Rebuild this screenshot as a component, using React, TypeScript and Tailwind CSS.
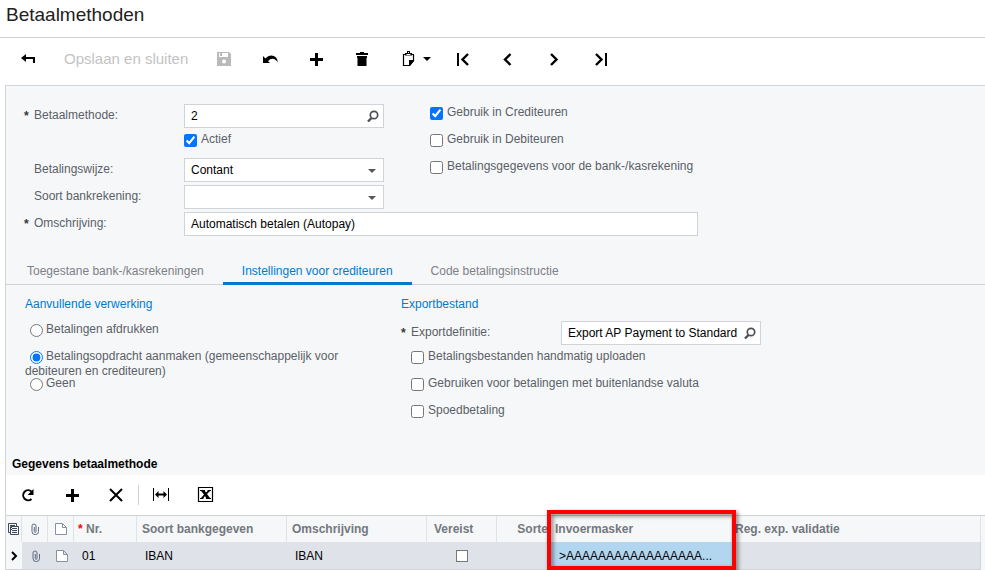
import React from "react";
import { clsx, type ClassValue } from "clsx";
import { twMerge } from "tailwind-merge";

function cn(...inputs: ClassValue[]) {
  return twMerge(clsx(inputs));
}

// ── Icons ─────────────────────────────────────────────────
function Icon({ children, className }: { children: React.ReactNode; className?: string }) {
  return (
    <svg viewBox="0 0 20 20" className={cn("w-5 h-5 shrink-0 block", className)} fill="currentColor" aria-hidden="true">
      {children}
    </svg>
  );
}

const BackIcon = () => (
  <Icon>
    <path d="M3 9 8 5v3h9v6h-2v-4H8v3z" />
  </Icon>
);

const SaveIcon = () => (
  <Icon>
    <path fillRule="evenodd" d="M3 3h12l2 2v12H3zM5 4v4h9V4zM10 10.500a2 2 0 1 0 0 4 2 2 0 0 0 0-4z" />
    <path d="M6 4h2v3H6z" />
  </Icon>
);

const UndoIcon = () => (
  <Icon>
    <path d="M3 7v7h7L8 12.200C11 8.500 15.500 9 17.500 13.500 18.500 7 10 3.500 5.500 9.500z" />
  </Icon>
);

const PlusIcon = () => (
  <Icon>
    <path d="M9 4h3v5h5v3h-5v5H9v-5H4V9h5z" />
  </Icon>
);

const TrashIcon = () => (
  <Icon>
    <path d="M8 3h4v1h4v2H4V4h4zM5 7h10v2h-.5v8h-9V9H5z" />
  </Icon>
);

const PasteIcon = () => (
  <svg viewBox="0 0 34 20" className="w-[34px] h-5 block" fill="currentColor" aria-hidden="true">
    <path d="M5.500 5.500h10v6l-4 5h-6z" fill="none" stroke="currentColor" strokeWidth="1.200" />
    <path d="M7 4h2V2h3v2h2v2.500H7zM11 11h5v1l-4 5h-1z" />
    <path d="M10 3h1v1h-1zM8.500 5h4v1h-4z" fill="#fff" />
    <path d="M25 8h8l-4 4z" />
  </svg>
);

const FirstIcon = () => (
  <Icon>
    <path d="M4 4h2v13H4z" />
    <path d="m15 5-5.500 5.500L15 16" fill="none" stroke="currentColor" strokeWidth="2.400" />
  </Icon>
);

const PrevIcon = () => (
  <Icon>
    <path d="m11.500 5-5.500 5.500 5.500 5.500" fill="none" stroke="currentColor" strokeWidth="2.400" />
  </Icon>
);

const NextIcon = () => (
  <Icon>
    <path d="m6 5 5.500 5.500L6 16" fill="none" stroke="currentColor" strokeWidth="2.400" />
  </Icon>
);

const LastIcon = () => (
  <Icon>
    <path d="M14 4h2v13h-2z" />
    <path d="m5 5 5.500 5.500L5 16" fill="none" stroke="currentColor" strokeWidth="2.400" />
  </Icon>
);

const RefreshIcon = () => (
  <Icon>
    <path d="M13.500 6.500A5 5 0 1 0 13.500 14" fill="none" stroke="currentColor" strokeWidth="2" />
    <path d="M15.500 4v6h-6z" />
  </Icon>
);

const CloseIcon = () => (
  <Icon>
    <path d="m4 4 12 12M16 4 4 16" fill="none" stroke="currentColor" strokeWidth="2" />
  </Icon>
);

const FitIcon = () => (
  <Icon>
    <path d="M2 3h1v13H2zM17 3h1v13h-1zM4 9.500 7.500 6v2.500h5V6L16 9.500 12.500 13v-2.500h-5V13z" />
  </Icon>
);

const ExcelIcon = () => (
  <Icon>
    <path d="M3.500 2.500h14v14h-14z" fill="none" stroke="currentColor" strokeWidth="1.200" />
    <path d="M5 5h5v1l1 1.500L12.500 6V5H16v1h-1l-3 3 3 4h1v1h-5v-1l-1-2-1.500 2v1H5v-1h1l3-3.500L6 6H5z" />
  </Icon>
);

const ClipIcon = () => (
  <svg viewBox="0 0 12 14" className="w-3 h-[14px] block mx-auto" fill="none" stroke="#5f6b80" strokeWidth="1" aria-hidden="true">
    <path d="M9.500 5v4.500a3 3 0 0 1-3 3H6a3 3 0 0 1-3-3V4a2 2 0 0 1 2-2 2 2 0 0 1 2 2v5.500a.8.8 0 0 1-1.700 0V5" />
  </svg>
);

const NoteIcon = () => (
  <svg viewBox="0 0 12 14" className="w-3 h-[14px] block mx-auto" fill="#fff" stroke="#8791a3" aria-hidden="true">
    <path d="M.5 1.500h7l4 4v7H.5zM7.500 1.500v4h4" />
  </svg>
);

const FilesIcon = () => (
  <svg viewBox="0 0 12 14" className="w-3 h-[14px] block mx-auto" fill="none" stroke="#3f495c" aria-hidden="true">
    <path d="M2.500 10.500h-2v-9h8v3M2 3.500h5M2 5.500h2M2 7.500h2M2.500 12.500v-8h8v8zM4 6.500h5M4 8.500h5M4 10.500h5" />
  </svg>
);

// ── Form pieces ───────────────────────────────────────────
const box = "w-full h-6 bg-white border border-[#d0d3d8] text-black px-1.5 leading-[22px] outline-none";

function FieldLabel({ htmlFor, required, children }: { htmlFor: string; required?: boolean; children: React.ReactNode }) {
  return (
    <label htmlFor={htmlFor} className="flex shrink-0 leading-[22px] text-[#5c5f66]">
      <span className="w-[10px] pt-px font-bold text-[#33363b]">{required && "*"}</span>
      {children}
    </label>
  );
}

function LookupInput({ id, value }: { id: string; value: string }) {
  return (
    <div className="relative w-[200px]">
      <input id={id} defaultValue={value} className={cn(box, "pr-5")} />
      <button aria-label="Zoeken" className="absolute right-[5px] top-[6px]">
        <svg viewBox="0 0 12 12" className="w-3 h-3 block" fill="none" stroke="#4c4f55" aria-hidden="true">
          <circle cx="7" cy="5" r="3.700" strokeWidth="1.700" />
          <path d="M4.500 8 1 11.500" strokeWidth="2.400" />
        </svg>
      </button>
    </div>
  );
}

function SelectBox({ id, options }: { id: string; options: string[] }) {
  return (
    <div className="relative w-[200px]">
      <select id={id} className={cn(box, "appearance-none")}>
        {options.map((o) => (
          <option key={o}>{o}</option>
        ))}
      </select>
      <svg viewBox="0 0 8 4" className="absolute right-2 top-[11px] w-2 h-1 pointer-events-none" fill="#55585e" aria-hidden="true">
        <path d="M0 0h8L4 4z" />
      </svg>
    </div>
  );
}

function Check({ label, checked }: { label: string; checked?: boolean }) {
  return (
    <label className="flex h-6 items-start text-[#5c5f66]">
      <input type="checkbox" defaultChecked={checked} className="w-[13px] h-[13px] mt-[3px] mr-1 shrink-0" />
      <span className="leading-4">{label}</span>
    </label>
  );
}

function Radio({ label, checked }: { label: string; checked?: boolean }) {
  return (
    <label className="block h-[27px] leading-[15px] text-[#5c5f66]">
      <input type="radio" name="verwerking" defaultChecked={checked} className="w-[13px] h-[13px] ml-[5px] mr-[3px] align-[-4px]" />
      {label}
    </label>
  );
}

// ── Tabs ──────────────────────────────────────────────────
const tabs = ["Toegestane bank-/kasrekeningen", "Instellingen voor crediteuren", "Code betalingsinstructie"];

function TabBar({ active }: { active: number }) {
  return (
    <div role="tablist" className="flex h-[29px] pl-[2px] border-b border-[#d0d3d8]">
      {tabs.map((tab, i) => (
        <button
          key={tab}
          role="tab"
          aria-selected={i === active}
          className={cn(
            "h-[29px] px-[19px] pt-1 border-b-[3px]",
            i === active ? "text-[#027acc] border-[#027acc]" : "text-[#7e8085] border-transparent"
          )}
        >
          {tab}
        </button>
      ))}
    </div>
  );
}

// ── Toolbars ──────────────────────────────────────────────
function MainToolbar() {
  return (
    <div className="flex items-center h-[47px] pl-[18px] pb-[5px]">
      <div className="flex items-center gap-[26px]">
        <button aria-label="Terug"><BackIcon /></button>
        <button disabled className="text-[15px] text-[#c3c3c3]">Opslaan en sluiten</button>
        <button disabled aria-label="Opslaan" className="text-[#b9b9b9]"><SaveIcon /></button>
        <button aria-label="Ongedaan maken"><UndoIcon /></button>
        <button aria-label="Toevoegen"><PlusIcon /></button>
        <button aria-label="Verwijderen"><TrashIcon /></button>
        <button aria-label="Klembord"><PasteIcon /></button>
      </div>
      <div className="flex items-center gap-[26px] ml-[21px]">
        <button aria-label="Eerste"><FirstIcon /></button>
        <button aria-label="Vorige"><PrevIcon /></button>
        <button aria-label="Volgende"><NextIcon /></button>
        <button aria-label="Laatste"><LastIcon /></button>
      </div>
    </div>
  );
}

function GridToolbar() {
  return (
    <div className="flex items-center h-10 pl-3 pb-px gap-6 bg-white">
      <button aria-label="Vernieuwen"><RefreshIcon /></button>
      <button aria-label="Rij toevoegen"><PlusIcon /></button>
      <button aria-label="Rij verwijderen"><CloseIcon /></button>
      <div className="-ml-3 border-l border-[#d0d3d8] pl-3">
        <button className="block" aria-label="Kolommen passend maken"><FitIcon /></button>
      </div>
      <button aria-label="Exporteren naar Excel"><ExcelIcon /></button>
    </div>
  );
}

// ── Details grid ──────────────────────────────────────────
const th = "h-[26px] p-0 pl-[5px] text-left font-bold text-[#74777d] bg-[#f5f7f9] border-r border-[#dfe2e7] whitespace-nowrap";
const td = "h-7 p-0 pl-2 bg-[#dfe2e8] border-b border-[#d0d3d8] whitespace-nowrap text-black";

function DetailsTable() {
  return (
    <div className="border-t border-[#d0d3d8] pr-1">
      <table className="w-full table-fixed border-separate border-spacing-0">
        <colgroup>
          <col className="w-4" />
          <col className="w-[26px]" />
          <col className="w-[26px]" />
          <col className="w-[63px]" />
          <col className="w-[150px]" />
          <col className="w-[140px]" />
          <col className="w-[70px]" />
          <col className="w-[54px]" />
          <col className="w-[181px]" />
          <col />
        </colgroup>
        <thead>
          <tr>
            <th className={cn(th, "pl-0")}><FilesIcon /></th>
            <th className={cn(th, "pl-0")}><ClipIcon /></th>
            <th className={cn(th, "pl-0")}><NoteIcon /></th>
            <th className={cn(th, "pl-1")}><span className="text-[#ff0000]">*</span> Nr.</th>
            <th className={th}>Soort bankgegeven</th>
            <th className={th}>Omschrijving</th>
            <th className={cn(th, "pl-[7px]")}>Vereist</th>
            <th className={cn(th, "pl-0 pr-[2px] text-right")}>Sorte</th>
            <th className={cn(th, "relative pl-1")}>
              Invoermasker
              <div className="absolute z-10 -left-1 -right-[5px] -top-1.5 h-[60px] border-4 border-[#fe0000] drop-shadow-[2px_2px_2px_rgba(0,0,0,0.5)] pointer-events-none" />
            </th>
            <th className={cn(th, "pl-[3px]")}>Reg. exp. validatie</th>
          </tr>
        </thead>
        <tbody>
          <tr>
            <td className={cn(td, "pl-0 bg-[#f5f7f9]")}>
              <svg viewBox="0 0 8 10" className="w-2 h-[10px] block mx-auto" fill="none" stroke="#000" strokeWidth="2" aria-hidden="true">
                <path d="m2 1 4 4-4 4" />
              </svg>
            </td>
            <td className={cn(td, "pl-px")}><ClipIcon /></td>
            <td className={cn(td, "pl-px")}><NoteIcon /></td>
            <td className={td}>01</td>
            <td className={td}>IBAN</td>
            <td className={td}>IBAN</td>
            <td className={cn(td, "pl-0")}>
              <input type="checkbox" aria-label="Vereist" className="block mx-auto appearance-none w-3 h-3 bg-white border border-[#777]" />
            </td>
            <td className={td} />
            <td className={cn(td, "bg-[#b3d6f0]")}>&gt;AAAAAAAAAAAAAAAAA...</td>
            <td className={cn(td, "border-r")} />
          </tr>
        </tbody>
      </table>
    </div>
  );
}

export default function App() {
  return (
    <div className="bg-white text-black text-[12px] leading-4 font-['Liberation_Sans',Arial,sans-serif]">
      <header className="h-[38px] pl-[6px] border-b border-[#d0d3d8]">
        <h1 className="text-[19px] leading-[30px] text-[#222]">Betaalmethoden</h1>
      </header>
      <MainToolbar />

      <main className="ml-[5px] border-l border-t border-[#d0d3d8] bg-[#f5f7f9]">
        <section className="pt-[18px] pl-[18px] pb-5 grid grid-cols-[160px_246px_1fr]">
          <div className="grid gap-[3px] auto-rows-[24px]">
            <FieldLabel htmlFor="methode" required>Betaalmethode:</FieldLabel>
            <span />
            <FieldLabel htmlFor="wijze">Betalingswijze:</FieldLabel>
            <FieldLabel htmlFor="soort">Soort bankrekening:</FieldLabel>
            <FieldLabel htmlFor="omschrijving" required>Omschrijving:</FieldLabel>
          </div>
          <div className="grid gap-[3px] auto-rows-[24px]">
            <LookupInput id="methode" value="2" />
            <Check label="Actief" checked />
            <SelectBox id="wijze" options={["Contant"]} />
            <SelectBox id="soort" options={[""]} />
            <div className="w-[514px]">
              <input id="omschrijving" defaultValue="Automatisch betalen (Autopay)" className={box} />
            </div>
          </div>
          <div className="grid gap-[3px] auto-rows-[24px]">
            <Check label="Gebruik in Crediteuren" checked />
            <Check label="Gebruik in Debiteuren" />
            <Check label="Betalingsgegevens voor de bank-/kasrekening" />
          </div>
        </section>

        <TabBar active={1} />

        <section className="flex h-[171px] pl-[19px] pt-[11px]">
          <div className="w-[376px] pr-12">
            <h2 className="text-[#027acc]">Aanvullende verwerking</h2>
            <div className="pt-[10px]">
              <Radio label="Betalingen afdrukken" />
              <Radio label="Betalingsopdracht aanmaken (gemeenschappelijk voor debiteuren en crediteuren)" checked />
              <Radio label="Geen" />
            </div>
          </div>
          <div>
            <h2 className="text-[#027acc]">Exportbestand</h2>
            <div className="flex justify-between w-[360px] pt-[9px] pb-[3px]">
              <FieldLabel htmlFor="export" required>Exportdefinitie:</FieldLabel>
              <LookupInput id="export" value="Export AP Payment to Standard" />
            </div>
            <div className="flex flex-col gap-[3px] pl-[10px]">
              <Check label="Betalingsbestanden handmatig uploaden" />
              <Check label="Gebruiken voor betalingen met buitenlandse valuta" />
              <Check label="Spoedbetaling" />
            </div>
          </div>
        </section>

        <h2 className="h-[19px] pl-[6px] font-bold">Gegevens betaalmethode</h2>
        <GridToolbar />
        <DetailsTable />
      </main>
    </div>
  );
}
